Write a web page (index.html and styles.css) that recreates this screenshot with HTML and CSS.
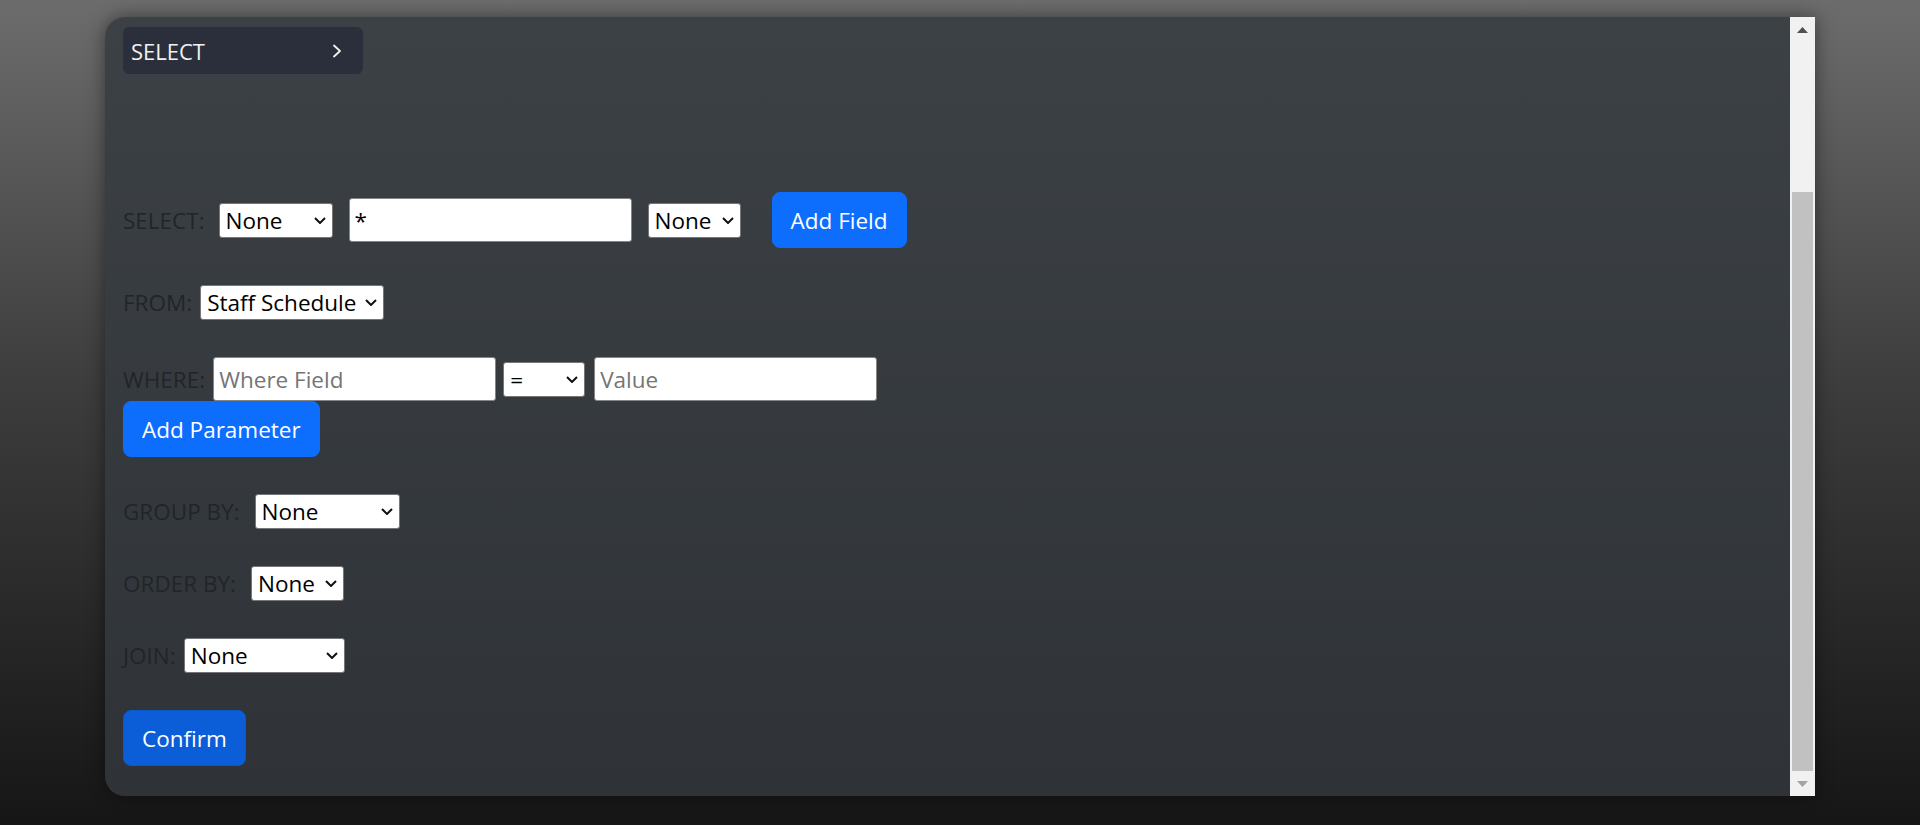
FILE: index.html
```html
<!DOCTYPE html>
<html lang="en">
<head>
<meta charset="utf-8">
<title>Query Builder</title>
<link rel="stylesheet" href="styles.css">
</head>
<body>
<div class="page">
  <div class="panel">
    <div class="content">
      <div class="header">
        <span class="header-title">SELECT</span>
        <svg class="header-chevron" width="10" height="14" viewBox="0 0 10 14"><polyline points="2,1.5 8,7 2,12.5" fill="none" stroke="#f2f2f2" stroke-width="1.8" stroke-linecap="round" stroke-linejoin="round"/></svg>
      </div>
      <form class="query">
        <div class="row">
          <label class="lbl lbl-select">SELECT:</label>
          <span class="sel w-agg gap-16"><select><option>None</option><option>COUNT</option><option>SUM</option></select><svg class="caret" width="12" height="7" viewBox="0 0 12 7"><polyline points="1,1 6,6 11,1" fill="none" stroke="#111" stroke-width="2"/></svg></span>
          <input class="field gap-16" type="text" value="*">
          <span class="sel w-as gap-31"><select><option>None</option></select><svg class="caret" width="12" height="7" viewBox="0 0 12 7"><polyline points="1,1 6,6 11,1" fill="none" stroke="#111" stroke-width="2"/></svg></span>
          <button type="button" class="btn">Add Field</button>
        </div>
        <div class="row">
          <label class="lbl">FROM:</label>
          <span class="sel w-from"><select><option>Staff Schedule</option></select><svg class="caret" width="12" height="7" viewBox="0 0 12 7"><polyline points="1,1 6,6 11,1" fill="none" stroke="#111" stroke-width="2"/></svg></span>
        </div>
        <div class="where">
          <div class="row">
            <label class="lbl">WHERE:</label>
            <input class="field gap-7" type="text" placeholder="Where Field">
            <span class="sel w-op gap-9"><select><option>=</option><option>&lt;</option><option>&gt;</option></select><svg class="caret" width="12" height="7" viewBox="0 0 12 7"><polyline points="1,1 6,6 11,1" fill="none" stroke="#111" stroke-width="2"/></svg></span>
            <input class="field" type="text" placeholder="Value">
          </div>
          <button type="button" class="btn">Add Parameter</button>
        </div>
        <div class="row">
          <label class="lbl lbl-wide">GROUP BY:</label>
          <span class="sel w-group"><select><option>None</option></select><svg class="caret" width="12" height="7" viewBox="0 0 12 7"><polyline points="1,1 6,6 11,1" fill="none" stroke="#111" stroke-width="2"/></svg></span>
        </div>
        <div class="row">
          <label class="lbl lbl-wide">ORDER BY:</label>
          <span class="sel w-order"><select><option>None</option></select><svg class="caret" width="12" height="7" viewBox="0 0 12 7"><polyline points="1,1 6,6 11,1" fill="none" stroke="#111" stroke-width="2"/></svg></span>
        </div>
        <div class="row">
          <label class="lbl">JOIN:</label>
          <span class="sel w-join"><select><option>None</option></select><svg class="caret" width="12" height="7" viewBox="0 0 12 7"><polyline points="1,1 6,6 11,1" fill="none" stroke="#111" stroke-width="2"/></svg></span>
        </div>
        <div class="row">
          <button type="button" class="btn btn-confirm">Confirm</button>
        </div>
      </form>
    </div>
    <div class="scrollbar">
      <div class="sb-btn"><svg width="11" height="6" viewBox="0 0 11 6"><polygon points="0,6 5.5,0 11,6" fill="#505050"/></svg></div>
      <div class="sb-track"><div class="sb-thumb"></div></div>
      <div class="sb-btn"><svg width="11" height="6" viewBox="0 0 11 6"><polygon points="0,0 5.5,6 11,0" fill="#a3a3a3"/></svg></div>
    </div>
  </div>
</div>
</body>
</html>
```
FILE: styles.css
```css
html, body {
  margin: 0;
  height: 825px;
}
body {
  background: linear-gradient(180deg, #6c6c6c 0%, #3e3e3e 45%, #161616 100%);
  font-family: "Open Sans", "Noto Sans", sans-serif;
  overflow: hidden;
}
.page {
  padding-top: 17px;
  display: flex;
  justify-content: center;
}
.panel {
  width: 1710px;
  height: 779px;
  display: flex;
  border-radius: 20px 0 0 20px;
  background: linear-gradient(180deg, #3c4146 0%, #2f3338 100%);
  box-shadow: 0 0 18px rgba(0, 0, 0, 0.45);
}
.content {
  flex: 1;
  padding: 10px 18px 30px;
  display: flex;
  flex-direction: column;
}
.header {
  width: 240px;
  height: 48px;
  box-sizing: border-box;
  background: #2b2f3b;
  border-radius: 6px;
  display: flex;
  align-items: center;
  justify-content: space-between;
  padding: 0 21px 0 8px;
  color: #f2f2f2;
  font-size: 22px;
}
.header-chevron {
  display: block;
}
.query {
  margin: 118px 0 0;
  display: flex;
  flex-direction: column;
  gap: 37px;
}
.row {
  display: flex;
  align-items: center;
}
.lbl {
  color: #212529;
  font-size: 22.5px;
  margin-right: 8px;
}
.lbl-select {
  margin-right: 14px;
}
.lbl-wide {
  margin-right: 15px;
}
.sel {
  position: relative;
  display: inline-flex;
  height: 35px;
}
.sel select {
  appearance: none;
  -webkit-appearance: none;
  width: 100%;
  height: 100%;
  box-sizing: border-box;
  border: 1px solid #767676;
  border-radius: 3px;
  background: #fff;
  color: #000;
  font-family: inherit;
  font-size: 22.5px;
  padding: 0 0 0 6px;
  margin: 0;
}
.caret {
  position: absolute;
  right: 7px;
  top: 14px;
  pointer-events: none;
}
.w-agg { width: 114px; }
.w-as { width: 93px; }
.w-from { width: 184px; }
.w-op { width: 82px; }
.w-group { width: 145px; }
.w-order { width: 93px; }
.w-join { width: 161px; }
.gap-7 { margin-right: 7px; }
.gap-9 { margin-right: 9px; }
.gap-16 { margin-right: 16px; }
.gap-31 { margin-right: 31px; }
.field {
  width: 283px;
  height: 44px;
  box-sizing: border-box;
  border: 1px solid #858585;
  border-radius: 3px;
  background: #fff;
  color: #000;
  font-family: inherit;
  font-size: 22.5px;
  padding: 0 5px;
  margin-top: 0;
  margin-bottom: 0;
  margin-left: 0;
}
.field::placeholder {
  color: #757575;
}
.where {
  display: flex;
  flex-direction: column;
  align-items: flex-start;
}
.btn {
  height: 56px;
  box-sizing: border-box;
  border: 1px solid #0d6efd;
  border-radius: 8px;
  background: #0d6efd;
  color: #fff;
  font-family: inherit;
  font-size: 22.5px;
  padding: 0 18px;
  margin: 0;
}
.btn-confirm {
  background: #0b5ed7;
  border-color: #0a58ca;
}
.scrollbar {
  width: 25px;
  background: #f1f1f1;
  display: flex;
  flex-direction: column;
}
.sb-btn {
  height: 25px;
  display: flex;
  align-items: center;
  justify-content: center;
}
.sb-track {
  flex: 1;
  display: flex;
  flex-direction: column;
  justify-content: flex-end;
  padding: 0 2px;
}
.sb-thumb {
  height: 579px;
  background: #c1c1c1;
}
```
